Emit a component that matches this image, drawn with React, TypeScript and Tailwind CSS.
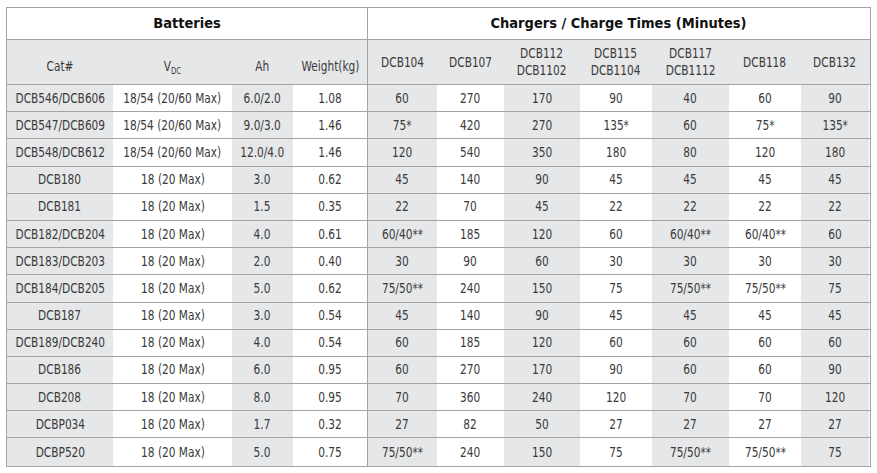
import React from "react";

const rows: string[][] = [
  ["DCB546/DCB606", "18/54 (20/60 Max)", "6.0/2.0", "1.08", "60", "270", "170", "90", "40", "60", "90"],
  ["DCB547/DCB609", "18/54 (20/60 Max)", "9.0/3.0", "1.46", "75*", "420", "270", "135*", "60", "75*", "135*"],
  ["DCB548/DCB612", "18/54 (20/60 Max)", "12.0/4.0", "1.46", "120", "540", "350", "180", "80", "120", "180"],
  ["DCB180", "18 (20 Max)", "3.0", "0.62", "45", "140", "90", "45", "45", "45", "45"],
  ["DCB181", "18 (20 Max)", "1.5", "0.35", "22", "70", "45", "22", "22", "22", "22"],
  ["DCB182/DCB204", "18 (20 Max)", "4.0", "0.61", "60/40**", "185", "120", "60", "60/40**", "60/40**", "60"],
  ["DCB183/DCB203", "18 (20 Max)", "2.0", "0.40", "30", "90", "60", "30", "30", "30", "30"],
  ["DCB184/DCB205", "18 (20 Max)", "5.0", "0.62", "75/50**", "240", "150", "75", "75/50**", "75/50**", "75"],
  ["DCB187", "18 (20 Max)", "3.0", "0.54", "45", "140", "90", "45", "45", "45", "45"],
  ["DCB189/DCB240", "18 (20 Max)", "4.0", "0.54", "60", "185", "120", "60", "60", "60", "60"],
  ["DCB186", "18 (20 Max)", "6.0", "0.95", "60", "270", "170", "90", "60", "60", "90"],
  ["DCB208", "18 (20 Max)", "8.0", "0.95", "70", "360", "240", "120", "70", "70", "120"],
  ["DCBP034", "18 (20 Max)", "1.7", "0.32", "27", "82", "50", "27", "27", "27", "27"],
  ["DCBP520", "18 (20 Max)", "5.0", "0.75", "75/50**", "240", "150", "75", "75/50**", "75/50**", "75"],
];

const chargers: string[][] = [
  ["DCB104"],
  ["DCB107"],
  ["DCB112", "DCB1102"],
  ["DCB115", "DCB1104"],
  ["DCB117", "DCB1112"],
  ["DCB118"],
  ["DCB132"],
];

const cols =
  "grid grid-cols-[106px_119px_61px_75px_69px_67px_76px_72px_77px_72px_68px]";

function T({ children }: { children: React.ReactNode }) {
  return <span className="inline-block whitespace-nowrap scale-x-[0.84] origin-center">{children}</span>;
}

export default function App() {
  return (
    <div
      className="w-[877px] h-[473px] bg-white pt-[7px] pl-[6px]"
      style={{ fontFamily: '"DejaVu Sans Condensed", "DejaVu Sans", sans-serif', fontStretch: "condensed" }}
    >
      <div className="w-[865px] border border-[#a2a4a6] text-[14px] text-[#3a3a3a]">
        {/* header 1 */}
        <div className={`${cols} h-[32px] border-b border-[#a2a4a6]`}>
          <div className="col-span-4 flex items-center justify-center border-r border-[#a2a4a6] text-[14.5px] font-bold text-[#111]">
            Batteries
          </div>
          <div className="col-span-7 flex items-center justify-center text-[14.5px] font-bold text-[#111]">
            Chargers / Charge Times (Minutes)
          </div>
        </div>
        {/* header 2 */}
        <div className={`${cols} h-[45px] border-b border-[#a2a4a6] bg-[#e6e7e8]`}>
          <div className="flex items-end justify-center pb-[7px]">
            <T>Cat#</T>
          </div>
          <div className="flex items-end justify-center pb-[7px]">
            <T>
              V<sub className="text-[9px] align-baseline relative top-[3px]">DC</sub>
            </T>
          </div>
          <div className="flex items-end justify-center pb-[7px]">
            <T>Ah</T>
          </div>
          <div className="flex items-end justify-center pb-[7px] border-r border-[#a2a4a6]">
            <T>Weight(kg)</T>
          </div>
          {chargers.map((c, i) => (
            <div key={i} className="flex flex-col items-center justify-center leading-[17px]">
              {c.map((l) => (
                <T key={l}>{l}</T>
              ))}
            </div>
          ))}
        </div>
        {/* data */}
        {rows.map((r, ri) => (
          <div
            key={ri}
            className={`${cols} h-[27.2px] ${ri < rows.length - 1 ? "border-b border-[#a2a4a6]" : ""}`}
          >
            {r.map((v, ci) => (
              <div
                key={ci}
                className={`flex items-center justify-center ${ci % 2 === 0 ? "bg-[#e6e7e8]" : "bg-white"} ${
                  ci === 3 ? "border-r border-[#a2a4a6]" : ""
                }`}
              >
                <T>{v}</T>
              </div>
            ))}
          </div>
        ))}
      </div>
    </div>
  );
}
